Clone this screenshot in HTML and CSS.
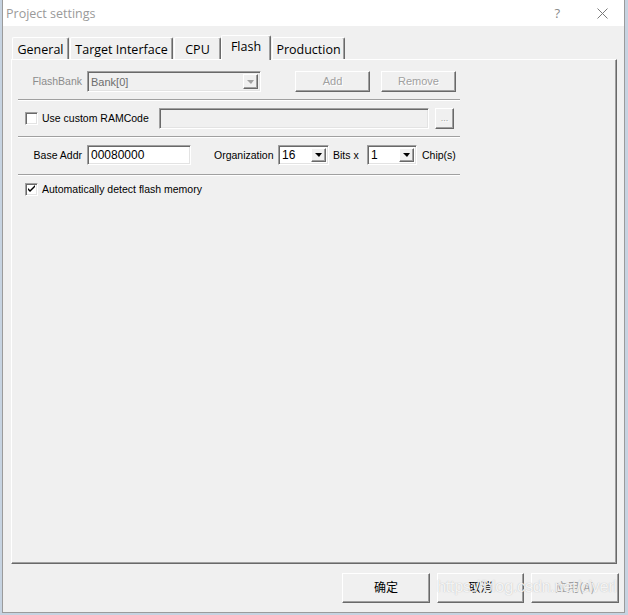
FILE: index.html
```html
<!DOCTYPE html>
<html lang="en">
<head>
    <meta charset="UTF-8">
    <title>Project settings</title>
    <link rel="stylesheet" href="styles.css">
</head>
<body>

    <div class="window">
        <div class="titlebar">
            <span class="title">Project settings</span>
            <span class="help">?</span>
            <span class="close">
                <svg width="11" height="11" viewBox="0 0 11 11">
                    <path d="M0.5 0.5 L10.5 10.5 M10.5 0.5 L0.5 10.5" stroke="#7a7a7a" stroke-width="1" fill="none"/>
                </svg>
            </span>
        </div>

        <div class="client">
            <div class="tabs">
                <div class="tab tab-general">General</div>
                <div class="tab tab-target">Target Interface</div>
                <div class="tab tab-cpu">CPU</div>
                <div class="tab tab-flash active">Flash</div>
                <div class="tab tab-production">Production</div>
            </div>

            <div class="panel">
                <div class="row">
                    <span class="lbl disabled">FlashBank</span>
                    <div class="combo sunken off bank">
                        <span class="combo-text">Bank[0]</span>
                        <span class="drop raised"><i class="arrow"></i></span>
                    </div>
                    <button class="btn raised btn-add" disabled>Add</button>
                    <button class="btn raised btn-remove" disabled>Remove</button>
                </div>
                <div class="sep"></div>

                <div class="row">
                    <span class="check sunken"></span>
                    <span class="check-label ram-label">Use custom RAMCode</span>
                    <div class="field sunken off ram-field"></div>
                    <button class="btn raised btn-browse" disabled>...</button>
                </div>
                <div class="sep"></div>

                <div class="row row-top">
                    <span class="lbl">Base Addr</span>
                    <div class="field sunken addr">00080000</div>
                    <span class="org-label">Organization</span>
                    <div class="combo sunken org">
                        <span class="combo-text">16</span>
                        <span class="drop raised"><i class="arrow"></i></span>
                    </div>
                    <span class="bits-label">Bits x</span>
                    <div class="combo sunken chips">
                        <span class="combo-text">1</span>
                        <span class="drop raised"><i class="arrow"></i></span>
                    </div>
                    <span class="chips-label">Chip(s)</span>
                </div>
                <div class="sep sep-last"></div>

                <div class="row row-auto">
                    <span class="check sunken">
                        <svg width="9" height="9" viewBox="0 0 9 9">
                            <path d="M1 3 L3 5 L8 0 V2 L3 7 L1 5 Z" fill="#000"/>
                        </svg>
                    </span>
                    <span class="check-label">Automatically detect flash memory</span>
                </div>
            </div>

            <div class="actions">
                <button class="action raised">确定</button>
                <button class="action raised">取消</button>
                <button class="action raised" disabled>应用(A)</button>
            </div>
        </div>

        <div class="watermark">https://blog.csdn.net/civerl</div>
    </div>

</body>
</html>
```

FILE: styles.css
```css
body {
    margin: 0;
    padding: 0;
    background: #c6d3e1; /* desktop behind the dialog */
    font-family: "Liberation Sans", Arial, sans-serif;
    font-size: 10.5px;
    color: #000;
    overflow: hidden;
}

.window {
    position: relative;
    margin-left: 2px;
    width: 621px;
    height: 612px;
    background: #f0f0f0;
    border: 1px solid #9b9b9b;
    border-top: none;
}

/* title bar */
.titlebar {
    height: 26px;
    background: #fff;
    display: flex;
    align-items: center;
    padding-right: 16px;
}

.title {
    margin-left: 3px;
    font-family: "Open Sans", sans-serif;
    font-size: 12.5px;
    color: #9a9a9a;
}

.help {
    margin-left: auto;
    font-family: "Open Sans", sans-serif;
    font-size: 13px;
    color: #8a8a8a;
}

.close {
    display: flex;
    margin-left: 37px;
}

/* client area */
.client {
    padding: 9px 7px 0 8px;
}

.tabs {
    display: flex;
    align-items: flex-end;
    gap: 1px;
    height: 24px;
    padding-left: 1px;
}

.tab {
    box-sizing: border-box;
    height: 22px;
    display: flex;
    align-items: center;
    justify-content: center;
    font-family: "Open Sans", sans-serif;
    font-size: 12.5px;
    background: #f0f0f0;
    border-top: 1px solid #fff;
    border-left: 1px solid #fff;
    border-right: 1px solid #696969;
    border-radius: 2px 2px 0 0;
    box-shadow: inset -1px 0 #a0a0a0;
    padding-top: 1px;
}

.tab-general { width: 57px; }
.tab-target { width: 103px; }
.tab-cpu { width: 47px; }
.tab-flash { width: 50px; margin-left: -1px; }
.tab-production { width: 73px; }

.tab.active {
    position: relative;
    z-index: 1;
    height: 25px;
    margin-bottom: -1px;
    padding-top: 0;
    padding-bottom: 4px;
}

.panel {
    box-sizing: border-box;
    height: 505px;
    padding-top: 11px;
    border: 1px solid;
    border-color: #fff #696969 #696969 #fff;
    box-shadow: inset -1px -1px #a0a0a0;
}

/* 3D borders of the classic controls */
.sunken {
    box-sizing: border-box;
    background: #fff;
    border: 1px solid;
    border-color: #a0a0a0 #fff #fff #a0a0a0;
    box-shadow: inset 1px 1px #696969, inset -1px -1px #e3e3e3;
}

.sunken.off {
    background: #f0f0f0;
}

.raised {
    box-sizing: border-box;
    background: #f0f0f0;
    border: 1px solid;
    border-color: #fff #696969 #696969 #fff;
    box-shadow: inset -1px -1px #a0a0a0;
}

.row {
    display: flex;
    align-items: center;
    height: 21px;
}

.row > span {
    padding-bottom: 2px;
}

.row-top {
    align-items: flex-start;
}

.lbl {
    width: 70px;
    margin-right: 5px;
    text-align: right;
    line-height: 20px;
}

.disabled {
    color: #8c8c8c;
}

.combo {
    display: flex;
    align-items: stretch;
    height: 21px;
    padding: 2px;
}

.combo-text {
    flex: 1;
    display: flex;
    align-items: center;
    padding-left: 1px;
    font-size: 12px;
}

.bank { width: 174px; }
.bank .combo-text { color: #6d6d6d; font-size: 11px; }

.drop {
    width: 15px;
    flex: none;
    display: flex;
    align-items: center;
    justify-content: center;
}

.arrow {
    width: 0;
    height: 0;
    border-top: 4px solid #000;
    border-left: 4px solid transparent;
    border-right: 3px solid transparent;
}

.bank .arrow {
    border-top-color: #a0a0a0;
}

.btn {
    height: 21px;
    padding: 0 0 1px;
    font-family: inherit;
    font-size: 11px;
}

.btn:disabled {
    color: #a0a0a0;
    text-shadow: 1px 1px #fff;
}

.btn-add { width: 75px; margin-left: 34px; }
.btn-remove { width: 75px; margin-left: 11px; }

.btn-browse {
    width: 19px;
    margin-left: 6px;
    font-size: 9px;
}

.sep {
    width: 442px;
    margin: 7px 0 7px 6px;
    border-top: 1px solid #a0a0a0;
    border-bottom: 1px solid #fff;
}

.sep-last {
    margin-top: 8px;
}

.row > .check {
    width: 13px;
    height: 13px;
    margin-left: 13px;
    padding: 0;
    flex: none;
    display: flex;
    align-items: center;
    justify-content: center;
}

.check-label {
    margin-left: 4px;
}

.ram-label { width: 117px; }

.field {
    height: 21px;
    display: flex;
    align-items: center;
    padding-left: 3px;
    font-size: 12px;
}

.ram-field { width: 270px; }

.addr {
    width: 104px;
    height: 20px;
}

.org-label {
    width: 64px;
    margin-left: 23px;
    line-height: 20px;
}

.org { width: 51px; height: 20px; }
.chips { width: 50px; height: 20px; }

.bits-label {
    width: 34px;
    margin-left: 4px;
    line-height: 20px;
}

.chips-label {
    margin-left: 5px;
    line-height: 20px;
}

.row-auto {
    height: 13px;
}

/* dialog buttons */
.actions {
    display: flex;
    justify-content: flex-end;
    gap: 7px;
    margin-top: 9px;
    margin-right: -2px;
}

.action {
    width: 88px;
    height: 30px;
    padding: 0 0 3px;
    font-family: "Noto Sans CJK SC", sans-serif;
    font-size: 12px;
    color: #000;
}

.action:nth-child(2) { width: 87px; }

.action:disabled {
    color: #a0a0a0;
}

.watermark {
    position: absolute;
    left: 434px;
    top: 577px;
    font-family: "Liberation Sans", Arial, sans-serif;
    font-size: 16.5px;
    letter-spacing: -0.4px;
    color: rgba(255, 255, 255, 0.85);
    text-shadow: 0 0 1px rgba(120, 120, 120, 0.5);
    pointer-events: none;
}
```
